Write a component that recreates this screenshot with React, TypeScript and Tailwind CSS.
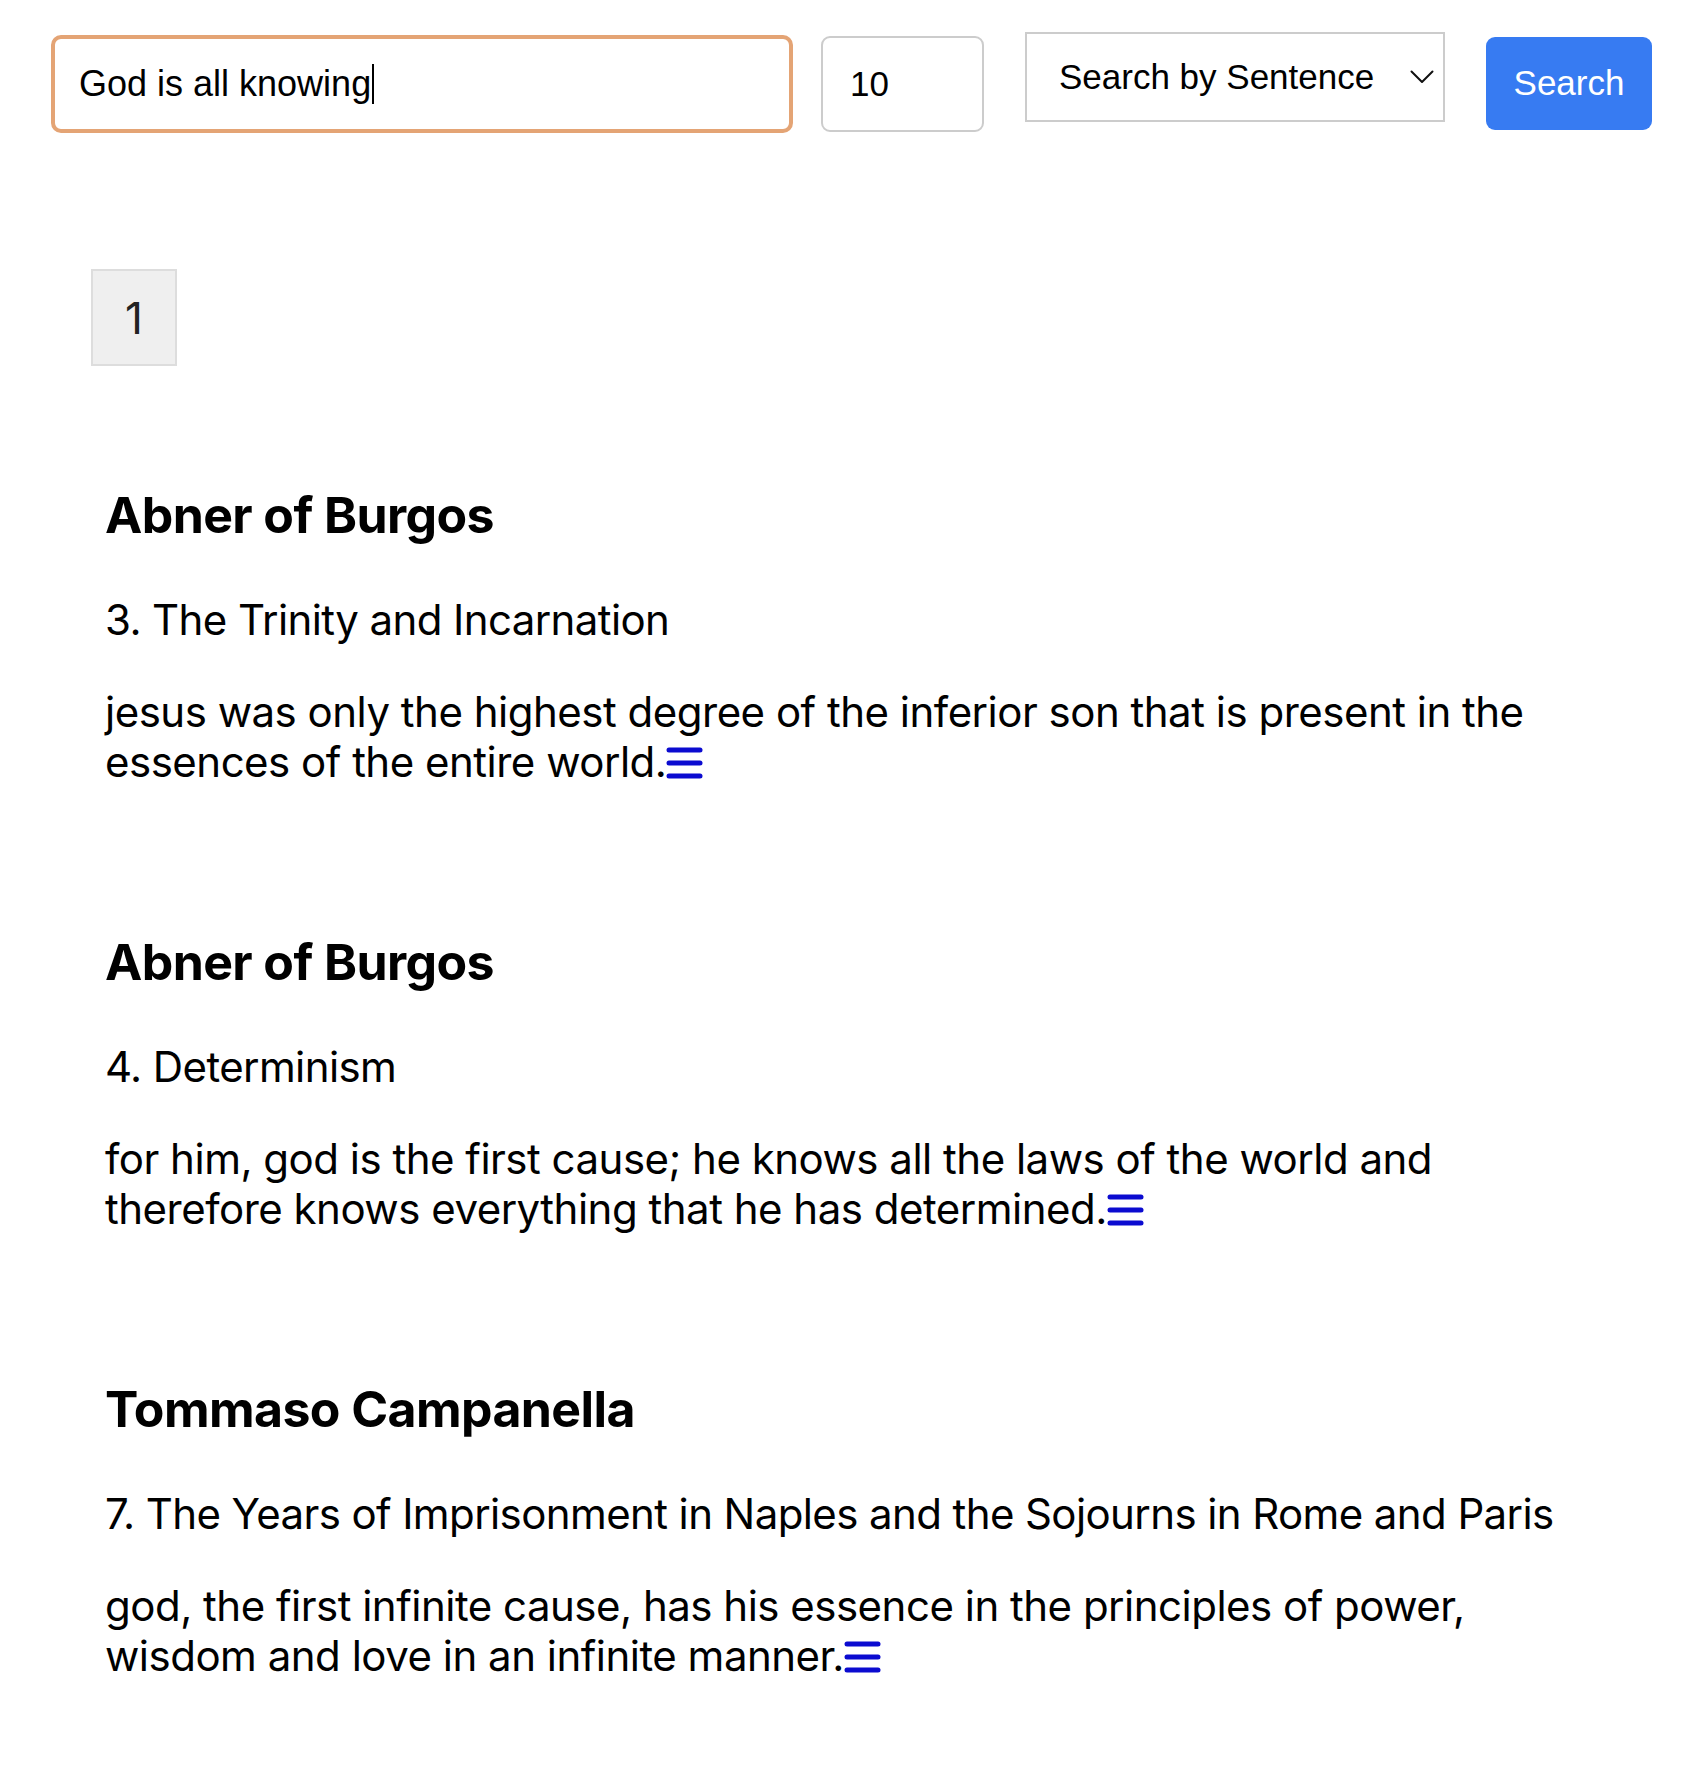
import React from 'react';

const results = [
  {
    author: 'Abner of Burgos',
    section: '3. The Trinity and Incarnation',
    text: 'jesus was only the highest degree of the inferior son that is present in the essences of the entire world.',
  },
  {
    author: 'Abner of Burgos',
    section: '4. Determinism',
    text: 'for him, god is the first cause; he knows all the laws of the world and therefore knows everything that he has determined.',
  },
  {
    author: 'Tommaso Campanella',
    section: '7. The Years of Imprisonment in Naples and the Sojourns in Rome and Paris',
    text: 'god, the first infinite cause, has his essence in the principles of power, wisdom and love in an infinite manner.',
  },
];

function BarsIcon() {
  return (
    <svg width="37" height="32" viewBox="0 0 37 32" className="inline-block align-baseline -mb-[2px]">
      <g stroke="#0b0bd0" strokeWidth="5" strokeLinecap="round">
        <line x1="3" y1="3" x2="34" y2="3" />
        <line x1="3" y1="16" x2="34" y2="16" />
        <line x1="3" y1="29" x2="34" y2="29" />
      </g>
    </svg>
  );
}

export default function App() {
  const sans = { fontFamily: 'Inter, "Noto Sans", sans-serif' };
  const arial = { fontFamily: '"Liberation Sans", Arial, sans-serif' };

  return (
    <div className="min-h-screen bg-white text-black" style={sans}>
      {/* search bar */}
      <div className="flex items-start pl-[51px] pt-[32px]" style={arial}>
        <div className="mt-[3px] flex h-[98px] w-[742px] items-center rounded-[10px] border-[4px] border-[#e4a475] pl-[24px] text-[36px] text-black">
          <span>God is all knowing</span>
          <span className="ml-[1px] h-[40px] w-[2px] bg-black" />
        </div>
        <div className="ml-[28px] mt-[4px] flex h-[96px] w-[163px] items-center rounded-[9px] border-2 border-[#cccccc] pl-[27px] text-[35px]">
          10
        </div>
        <div className="ml-[41px] flex h-[90px] w-[420px] items-center justify-between border-2 border-[#cccccc] pl-[32px] pr-[9px] text-[35px]">
          <span>Search by Sentence</span>
          <svg width="24" height="14" viewBox="0 0 24 14" fill="none">
            <path d="M1.5 1.5 L12 12 L22.5 1.5" stroke="#111" strokeWidth="2" strokeLinecap="round" strokeLinejoin="round" />
          </svg>
        </div>
        <button className="ml-[41px] mt-[5px] h-[93px] w-[166px] rounded-[9px] bg-[#377bf2] text-[35px] text-white">
          Search
        </button>
      </div>

      {/* pagination */}
      <div className="pl-[91px] pt-[136px]">
        <div className="flex h-[97px] w-[86px] items-center justify-center border-2 border-[#dddddd] bg-[#efefef] text-[44px] text-[#222]">
          1
        </div>
      </div>

      {/* results */}
      <div className="flex flex-col gap-[145px] pl-[105px] pr-[114px] pt-[119px]">
        {results.map((r, i) => (
          <div key={i}>
            <h2 className="text-[50px] font-bold leading-[60px] tracking-[-0.6px]">{r.author}</h2>
            <p className="mt-[50px] text-[42px] leading-[50px] tracking-[-0.6px]">{r.section}</p>
            <p className="mt-[42px] text-[42px] leading-[50px] tracking-[-0.5px]">
              {r.text}
              <BarsIcon />
            </p>
          </div>
        ))}
      </div>
    </div>
  );
}
